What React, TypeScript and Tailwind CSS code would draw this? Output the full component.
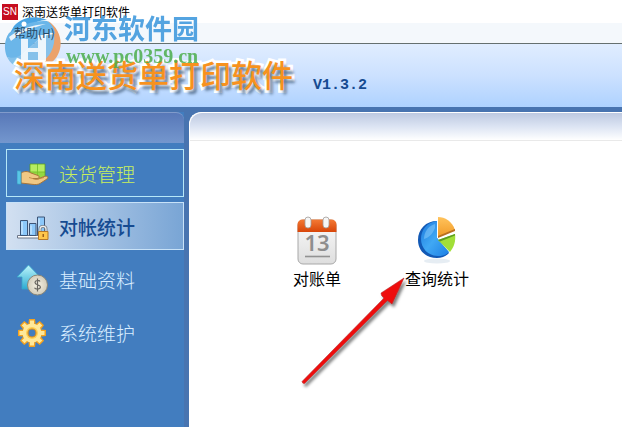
import React, { useState } from 'react';

const BoxInHandIcon = () => (
  <svg width="32" height="32" viewBox="0 0 32 32" aria-hidden="true">
    <path d="M13 6h15v16H13z" fill="#7cc52f" stroke="#5a9a2a" strokeWidth="0.8" />
    <path d="M13.500 6.500h6.500v7h-6.500zM21 6.500h6.500v7H21z" fill="#b6ec62" />
    <path d="M13.500 14.500h6.500V21h-6.500zM21 14.500h6.500V21H21z" fill="#94d842" />
    <path d="M4 15c3-2 7-2 10 0l7 2.500c2 .6 1.500 3-1 3h-4l5 .5 6-2.500c3-.8 5 0 3 2.500l-7 4.500c-2 1.200-5 1.200-8 .8L4 25z" fill="#f0c884" stroke="#a8763a" strokeWidth="1" />
    <path d="M12 19.500l7 2 8-2" fill="none" stroke="#b9843f" strokeWidth="0.8" />
    <path d="M0 12.500l4 .5v13.500l-4-.5z" fill="#59c7e6" stroke="#338fba" strokeWidth="0.7" />
  </svg>
);

const LockedChartIcon = () => (
  <svg width="32" height="32" viewBox="0 0 32 32" aria-hidden="true">
    <path d="M0.500 24.500h24v2.500h-24z" fill="#fff" stroke="#6a7486" strokeWidth="1" />
    <g fill="#8cc8fa" stroke="#3d5476" strokeWidth="1">
      <path d="M3.500 9.500h7v15h-7zM12.500 12.500h6.500v12h-6.500zM20.500 6h7v18h-7z" />
    </g>
    <path d="M5 11v12M14 14.500V23M22 7.500v10" stroke="#dff1ff" strokeWidth="1" />
    <path d="M23 21v-3c0-3.500 6-3.500 6 0v3" fill="none" stroke="#777f8b" strokeWidth="3" />
    <path d="M23 21v-3c0-3.500 6-3.500 6 0v3" fill="none" stroke="#f1f1ee" strokeWidth="1.200" />
    <path d="M21.500 20.500h9.500v8h-9.500z" fill="#ffc64b" stroke="#b57929" strokeWidth="1" />
    <path d="M25.500 23h1.500v3h-1.500z" fill="#9b611d" />
  </svg>
);

const CostIcon = () => (
  <svg width="32" height="32" viewBox="0 0 32 32" aria-hidden="true">
    <defs>
      <linearGradient id="arrowUp" x2="0" y2="1">
        <stop stopColor="#bff6fb" />
        <stop offset="1" stopColor="#2cabd2" />
      </linearGradient>
      <radialGradient id="coin">
        <stop stopColor="#f5f2e5" />
        <stop offset="1" stopColor="#d2ccb9" />
      </radialGradient>
    </defs>
    <path d="M11.500 1L23 13h-5v12H5V13H0z" fill="url(#arrowUp)" stroke="#37a5cb" strokeWidth="0.8" />
    <circle cx="20.500" cy="21" r="10" fill="url(#coin)" stroke="#8b8778" strokeWidth="1" />
    <path d="M23 17.500c-.8-1.500-5-1.500-5 .9 0 2.800 5.400 1.800 5.400 4.700 0 2.500-4.800 2.600-5.900.6M20.500 14.500v13" fill="none" stroke="#69665f" strokeWidth="1.200" />
  </svg>
);

const GearIcon = () => (
  <svg width="32" height="32" viewBox="0 0 32 32" aria-hidden="true">
    <g transform="translate(-1 0)">
      <g fill="#f5a21e">
        {[0, 45, 90, 135].map((a) => (
          <path key={a} d="M12.500 6L13 2h6l.5 4v20l-.5 4h-6l-.5-4z" transform={`rotate(${a} 16 16)`} />
        ))}
      </g>
      <g fill="#ffe89a">
        {[0, 45, 90, 135].map((a) => (
          <path key={a} d="M14 3.500h4v25h-4z" transform={`rotate(${a} 16 16)`} />
        ))}
        <circle cx="16" cy="16" r="9.500" />
      </g>
      <circle cx="16" cy="16" r="6" fill="#ffcf52" />
      <circle cx="16" cy="16" r="4" fill="#427dbf" stroke="#d98b20" strokeWidth="1.200" />
    </g>
  </svg>
);

const CalendarIcon = () => (
  <svg width="40" height="50" viewBox="0 0 40 50" aria-hidden="true">
    <defs>
      <linearGradient id="page" x2="0" y2="1">
        <stop stopColor="#fafafa" />
        <stop offset="1" stopColor="#dedede" />
      </linearGradient>
      <linearGradient id="strip" x2="0" y2="1">
        <stop stopColor="#f47a35" />
        <stop offset="1" stopColor="#d84508" />
      </linearGradient>
    </defs>
    <rect x="1" y="4" width="38" height="44" rx="5" fill="url(#page)" stroke="#a8a8a8" />
    <path d="M.5 16V9q0-5.500 5.500-5.500h28q5.500 0 5.500 5.500v7z" fill="url(#strip)" />
    <g fill="#f6f6f6" stroke="#a19c99" strokeWidth="0.8">
      <rect x="8" y="1" width="6" height="11" rx="3" />
      <rect x="26" y="1" width="6" height="11" rx="3" />
    </g>
    <text x="20" y="35" textAnchor="middle" fontFamily="Noto Sans, sans-serif" fontWeight="600" fontSize="22" fill="#8e8e8e">13</text>
    <path d="M8 40.500h25" stroke="#929292" strokeWidth="1.600" />
  </svg>
);

const PieIcon = () => (
  <svg width="40" height="50" viewBox="0 0 40 50" aria-hidden="true">
    <defs>
      <linearGradient id="blue" x1="0" y1="0" x2="1" y2="1">
        <stop stopColor="#1c78dc" />
        <stop offset="0.500" stopColor="#40a8f4" />
        <stop offset="1" stopColor="#1c7fe4" />
      </linearGradient>
      <linearGradient id="orange" x2="0" y2="1">
        <stop stopColor="#ffc35c" />
        <stop offset="1" stopColor="#f19a27" />
      </linearGradient>
    </defs>
    <ellipse cx="20" cy="45" rx="13" ry="2.500" fill="#e6edf3" />
    <path d="M20 5C9 5 1 13 1 24s8 18 19 18c5 0 9-2 12-5L20 22z" fill="#1259b5" />
    <path d="M20 5C10 6 4 14 4 23c0 9 7 17 17 17 5 0 8-1 11-4L20 22z" fill="url(#blue)" />
    <path d="M18 8C11 10 7 16 7 23c6-2 9-6 11-11z" fill="#8ed0fb" opacity="0.500" />
    <path d="M21 1c7 0 14 4 17 13l-17 7z" fill="url(#orange)" />
    <path d="M21 20l17-7v2l-17 7z" fill="#b96f20" />
    <path d="M21 24l17-6c1 7-1 13-5 18z" fill="#a1df38" />
    <path d="M21 24l17-6v1.500l-15 6z" fill="#5c9b22" />
  </svg>
);

const MENU = [
  { id: 'delivery', label: '送货管理', icon: <BoxInHandIcon /> },
  { id: 'stats', label: '对帐统计', icon: <LockedChartIcon /> },
  { id: 'base', label: '基础资料', icon: <CostIcon /> },
  { id: 'system', label: '系统维护', icon: <GearIcon /> },
];

const SHORTCUTS = [
  { label: '对账单', icon: <CalendarIcon /> },
  { label: '查询统计', icon: <PieIcon /> },
];

const Watermark = () => (
  <div className="pointer-events-none absolute left-1 top-3.5 flex items-start" aria-hidden="true">
    <svg className="mt-0.5" width="60" height="56" viewBox="0 0 60 56">
      {/* orange ring on the right */}
      <path d="M44 5C60 15 61 37 46 48 36 55 23 54 14 49c12 2 24-2 31-12 6-9 7-21-1-32z" fill="#eba26c" />
      {/* blue globe with its swoosh */}
      <path d="M10 10C18 1 31-1 43 4c-7 0-14 3-20 7L6 17z" fill="#4ba5e4" />
      <path d="M5 17C0 24 0 34 3 41c6 3 12 1 17-4L38 20c5-4 9-4 13-2-1-7-4-11-8-13C29 4 15 10 5 17z" fill="#6bb6e9" />
      <path d="M3 41c3 6 7 9 12 10 14 1 27-5 32-15 3-6 4-12 3-18l-12 2-18 17c-5 4-11 6-17 4z" fill="#85c1ea" />
      <circle cx="20" cy="8" r="2.500" fill="#fff" />
      <path d="M5 21C15 13 28 9 42 8 30 11 18 16 7 25z" fill="#fff" opacity="0.850" />
      <path d="M17 23h7v9h10V19h8v26h-8V36H24v12h-7z" fill="#fff" opacity="0.850" />
    </svg>
    <div className="z-20 flex flex-col gap-1 opacity-85">
      <span className="text-[27px] leading-7 font-bold text-[#3795dc]">河东软件园</span>
      <span className="pl-0.5 font-['Liberation_Serif',serif] text-xl leading-5 font-bold text-[#4cae4c]">www.pc0359.cn</span>
    </div>
  </div>
);

const PointerArrow = () => (
  <svg className="pointer-events-none absolute left-[109px] top-[162px]" width="114" height="116" viewBox="0 0 114 116" aria-hidden="true">
    <defs>
      <filter id="soft" x="-20%" y="-20%" width="140%" height="140%">
        <feDropShadow dx="2" dy="3" stdDeviation="1.500" floodColor="#000" floodOpacity="0.500" />
      </filter>
    </defs>
    <g filter="url(#soft)" fill="#ee1111" stroke="#a82020" strokeWidth="0.500">
      <path d="M3 106.500L85 23l-2.500-2.500-.5-2.500L105 3 93 29l-4.500-3.500L5.500 108.500q-2 .5-2.500-2z" />
    </g>
  </svg>
);

const App: React.FC = () => {
  const [active, setActive] = useState('stats');

  const itemClass = (id: string) => {
    if (id === active) return 'border-[#c8e2f8] bg-linear-to-r from-[#d2e0f1] to-[#79a5d5] text-[#164b91] font-medium';
    if (id === 'delivery') return 'border-[#b6e7f8] text-[#c8f05c] font-light';
    return 'border-transparent text-[#d9edff] font-light';
  };

  return (
    <div className="relative flex min-h-screen flex-col bg-[#4874b0] font-['Noto_Sans_CJK_SC',sans-serif] text-black">
      <div className="flex h-[23px] items-center gap-1 bg-white pl-0.5 text-xs">
        <span className="flex h-4 w-4 items-center justify-center bg-[#c60d20] font-['Liberation_Sans',sans-serif] text-[10px] text-white">SN</span>
        <h1>深南送货单打印软件</h1>
      </div>
      <nav className="flex h-[21px] items-center border-b border-[#65706f] bg-[#f4f8fc] pl-3.5 text-xs">
        <button className="relative z-10 text-[#274a66]">帮助(H)</button>
      </nav>

      <header className="flex h-[63px] items-center gap-5 bg-linear-to-b from-[#e0edff] via-[#cce1ff] to-[#aed2ff] pl-3.5">
        <h2 className="relative z-10 pb-1 text-[31px] leading-8 font-medium text-[#f7921e] [-webkit-text-stroke:5px_white] [paint-order:stroke_fill] [text-shadow:3px_4px_3px_#5c7796]">
          深南送货单打印软件
        </h2>
        <span className="pt-5 font-['Liberation_Mono',monospace] text-[15px] leading-5 font-bold text-[#164b91]">V1.3.2</span>
      </header>

      <div className="flex flex-1 gap-[5px] pt-[5px]">
        <aside className="flex w-[184px] shrink-0 flex-col bg-[#427dbf]">
          <div className="h-[31px] rounded-tr-lg border-t border-[#819bcb] bg-linear-to-b from-[#5878b8] to-[#7497ce]" />
          <nav className="flex flex-col gap-[5px] pt-1.5 pl-1.5">
            {MENU.map((m) => (
              <button
                key={m.id}
                onClick={() => setActive(m.id)}
                className={`flex h-12 items-center gap-2.5 border pt-0.5 pl-2.5 text-[19px] ${itemClass(m.id)}`}
              >
                {m.icon}
                <span>{m.label}</span>
              </button>
            ))}
          </nav>
        </aside>

        <main className="relative flex-1 rounded-tl-xl border-t border-l border-white bg-white">
          <div className="h-7 rounded-tl-xl border-b border-[#e9e9e9] bg-linear-to-b from-[#bdc9e1] via-[#dce4f3] to-white" />
          <div className="flex gap-10 px-[87px] pt-[75px]">
            {SHORTCUTS.map((s) => (
              <button key={s.label} className="flex min-w-20 flex-col items-center text-base">
                {s.icon}
                <span>{s.label}</span>
              </button>
            ))}
          </div>
          <PointerArrow />
        </main>
      </div>

      <Watermark />
    </div>
  );
};

export default App;
